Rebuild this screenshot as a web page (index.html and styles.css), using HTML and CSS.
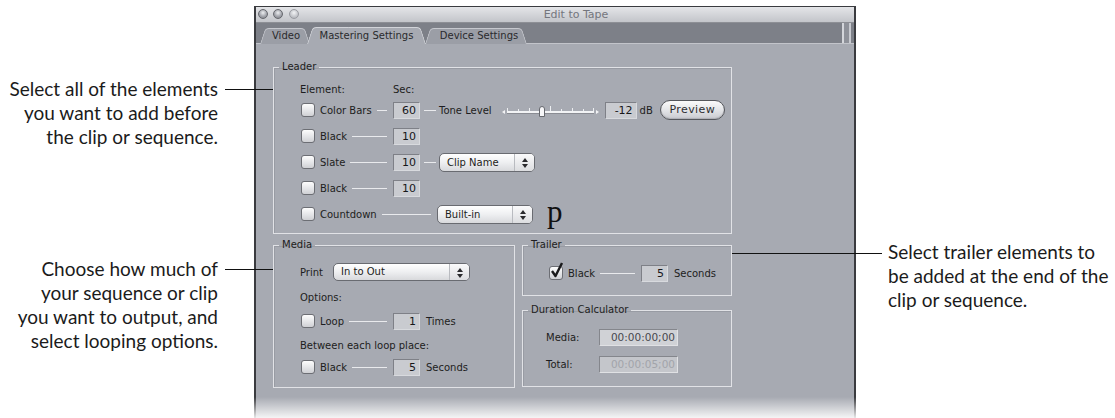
FILE: index.html
```html
<!DOCTYPE html>
<html lang="en">
<head>
  <meta charset="UTF-8" />
  <meta name="viewport" content="width=device-width, initial-scale=1.0" />
  <title>Edit to Tape</title>
  <link rel="stylesheet" href="styles.css">
</head>
<body>
<div class="page">
  <div class="window">
    <div class="titlebar">
      <div class="lights">
        <span class="light"></span>
        <span class="light"></span>
        <span class="light off"></span>
      </div>
      <div class="title">Edit to Tape</div>
    </div>
    <div class="tabbar">
      <div class="tab tab--video">Video</div>
      <div class="tab tab--active">Mastering Settings</div>
      <div class="tab tab--device">Device Settings</div>
      <div class="grip"></div>
    </div>
    <div class="body">
      <fieldset class="group leader">
        <legend>Leader</legend>
        <div class="group__inner">
          <div class="head"><span class="head__el">Element:</span><span>Sec:</span></div>
          <div class="row">
            <span class="check"></span>
            <span class="lead"><span>Color Bars</span><span class="rule"></span></span>
            <span class="field">60</span>
            <span class="dash"></span>
            <span>Tone Level</span>
            <svg class="slider" width="97" height="16" viewBox="0 0 97 16">
              <path d="M0 10 L3 8 L3 12 Z" fill="#f4f4f6" />
              <path d="M97 10 L94 8 L94 12 Z" fill="#f4f4f6" />
              <rect x="5" y="9" width="87" height="2" fill="#f2f3f5" />
              <rect x="5" y="11" width="87" height="1" fill="#8a8c93" />
              <g fill="#eceef1">
                <rect x="5" y="6" width="1" height="3" />
                <rect x="16" y="7" width="1" height="2" />
                <rect x="27" y="6" width="1" height="3" />
                <rect x="38" y="7" width="1" height="2" />
                <rect x="48" y="4" width="1" height="5" />
                <rect x="59" y="7" width="1" height="2" />
                <rect x="70" y="6" width="1" height="3" />
                <rect x="81" y="7" width="1" height="2" />
                <rect x="91" y="6" width="1" height="3" />
              </g>
              <path d="M37.5 14.5 L37.5 7 Q37.5 4.5 40 4.5 Q42.5 4.5 42.5 7 L42.5 14.5 Z" fill="#f6f6f8" stroke="#66686e" />
            </svg>
            <span class="field field--db">-12</span>
            <span class="unit">dB</span>
            <span class="button">Preview</span>
          </div>
          <div class="row">
            <span class="check"></span>
            <span class="lead"><span>Black</span><span class="rule"></span></span>
            <span class="field">10</span>
          </div>
          <div class="row">
            <span class="check"></span>
            <span class="lead"><span>Slate</span><span class="rule"></span></span>
            <span class="field">10</span>
            <span class="dash"></span>
            <span class="popup"><span class="popup__label">Clip Name</span><span class="popup__arrows"></span></span>
          </div>
          <div class="row">
            <span class="check"></span>
            <span class="lead"><span>Black</span><span class="rule"></span></span>
            <span class="field">10</span>
          </div>
          <div class="row">
            <span class="check"></span>
            <span class="lead lead--long"><span>Countdown</span><span class="rule"></span></span>
            <span class="popup"><span class="popup__label">Built-in</span><span class="popup__arrows"></span></span>
            <span class="stray">p</span>
          </div>
        </div>
      </fieldset>

      <div class="lower">
        <fieldset class="group media">
          <legend>Media</legend>
          <div class="group__inner">
            <div class="row row--print">
              <span class="print-label">Print</span>
              <span class="popup popup--wide"><span class="popup__label">In to Out</span><span class="popup__arrows"></span></span>
            </div>
            <div class="note note--options">Options:</div>
            <div class="row row--loop">
              <span class="check"></span>
              <span class="lead"><span>Loop</span><span class="rule"></span></span>
              <span class="field">1</span>
              <span class="after">Times</span>
            </div>
            <div class="note note--between">Between each loop place:</div>
            <div class="row row--black">
              <span class="check"></span>
              <span class="lead"><span>Black</span><span class="rule"></span></span>
              <span class="field">5</span>
              <span class="after">Seconds</span>
            </div>
          </div>
        </fieldset>

        <div class="side">
          <fieldset class="group trailer">
            <legend>Trailer</legend>
            <div class="group__inner">
              <div class="row row--trailer">
                <span class="check check--on">
                  <svg width="16" height="18" viewBox="0 0 16 18"><path d="M3 9 L6.5 14 L13 1" fill="none" stroke="#1a1a1c" stroke-width="2.4" stroke-linejoin="round" /></svg>
                </span>
                <span class="lead"><span>Black</span><span class="rule"></span></span>
                <span class="field">5</span>
                <span class="after">Seconds</span>
              </div>
            </div>
          </fieldset>
          <fieldset class="group duration">
            <legend>Duration Calculator</legend>
            <div class="group__inner">
              <div class="row row--time">
                <span class="time-label">Media:</span>
                <span class="timecode">00:00:00;00</span>
              </div>
              <div class="row row--time row--total">
                <span class="time-label">Total:</span>
                <span class="timecode timecode--off">00:00:05;00</span>
              </div>
            </div>
          </fieldset>
        </div>
      </div>
    </div>
  </div>

  <div class="callout callout--leader">Select all of the elements<br>you want to add before<br>the clip or sequence.</div>
  <div class="pointer pointer--leader"></div>
  <div class="callout callout--media">Choose how much of<br>your sequence or clip<br>you want to output, and<br>select looping options.</div>
  <div class="pointer pointer--media"></div>
  <div class="callout callout--trailer">Select trailer elements to<br>be added at the end of the<br>clip or sequence.</div>
  <div class="pointer pointer--trailer"></div>
</div>
</body>
</html>
```

FILE: styles.css
```css
* {
  box-sizing: border-box;
}
body {
  margin: 0;
  background: #fff;
}
.page {
  position: relative;
  width: 1115px;
  height: 418px;
  overflow: hidden;
  padding: 6px 0 0 254px;
  font-family: "DejaVu Sans", "Liberation Sans", sans-serif;
  font-size: 10px;
  color: #1d1d20;
}

/* window chrome */
.window {
  position: relative;
  width: 602px;
  height: 430px;
  border: 2px solid #3a3b3f;
  border-top-width: 1px;
  border-bottom: 0;
  background: #a7aab2;
}
.window::after {
  content: "";
  position: absolute;
  left: -2px;
  right: -2px;
  top: 390px;
  height: 28px;
  background: linear-gradient(rgba(255, 255, 255, 0), #fff 85%);
}
.titlebar {
  position: relative;
  height: 16px;
  background: linear-gradient(#e4e5e8, #c3c5ca);
  border-bottom: 1px solid #8d8f95;
}
.lights {
  position: absolute;
  left: 2px;
  top: 2px;
  display: flex;
  gap: 5px;
}
.light {
  width: 10px;
  height: 10px;
  border-radius: 50%;
  background: radial-gradient(circle at 50% 35%, #eceef1 0, #a3a5ac 55%, #7b7d84 100%);
  border: 1px solid #66686e;
}
.light.off {
  margin-left: 1px;
  background: radial-gradient(circle at 50% 35%, #f2f3f5 0, #c3c5ca 60%, #a9abb1 100%);
  border-color: #9a9ca2;
}
.title {
  text-align: center;
  padding-left: 42px;
  font-size: 11px;
  line-height: 16px;
  color: #74767d;
}
.tabbar {
  display: flex;
  align-items: flex-end;
  height: 21px;
  padding-left: 4px;
  background: #7d8088;
  border-bottom: 1px solid #c2c4ca;
}
.tab {
  position: relative;
  z-index: 1;
  height: 16px;
  line-height: 16px;
  margin-bottom: -1px;
  color: #2a2a2d;
  text-align: center;
}
.tab::before,
.tab::after {
  content: "";
  position: absolute;
  z-index: -1;
  top: 0;
  bottom: 0;
  width: 60%;
  background: #9b9ea6;
  border-top: 1px solid #c6c8ce;
}
.tab::before {
  left: 0;
  border-left: 1px solid #c6c8ce;
  border-radius: 4px 0 0 0;
  transform: skewX(-18deg);
  transform-origin: bottom left;
}
.tab::after {
  right: 0;
  border-right: 1px solid #c6c8ce;
  border-radius: 0 4px 0 0;
  transform: skewX(18deg);
  transform-origin: bottom right;
}
.tab--video {
  width: 50px;
  padding-left: 2px;
}
.tab--active {
  z-index: 2;
  width: 119px;
  margin-left: -3px;
  height: 17px;
  line-height: 17px;
}
.tab--active::before,
.tab--active::after {
  background: #a7aab2;
  border-color: #d2d4d9;
}
.tab--device {
  width: 102px;
  margin-left: -1px;
  padding-left: 6px;
}
.grip {
  align-self: stretch;
  margin-left: auto;
  margin-right: 3px;
  width: 9px;
  border-left: 2px solid #d4d6db;
  border-right: 2px solid #c8cad0;
  background: #8f929a;
}

/* content */
.body {
  padding: 17px 0 0 17px;
}
.group {
  margin: 0;
  padding: 0;
  min-width: 0;
  border: 1px solid #e1e2e6;
  box-shadow: inset 1px 1px 0 #989ba3;
}
.group legend {
  margin-left: 5px;
  padding: 0 3px;
  line-height: 12px;
  color: #1d1d20;
}
.leader {
  width: 459px;
}
.leader .group__inner {
  padding: 10px 0 6px 27px;
}
.head {
  display: flex;
  height: 14px;
  line-height: 14px;
  margin-left: -1px;
}
.head__el {
  width: 93px;
}
.row {
  display: flex;
  align-items: center;
  height: 26px;
  white-space: nowrap;
}
.check {
  position: relative;
  flex: none;
  width: 14px;
  height: 14px;
  margin-right: 5px;
  border: 1px solid #6c6e74;
  border-radius: 3px;
  background: linear-gradient(#fdfdfd, #e2e3e6 60%, #cfd0d4);
}
.check--on svg {
  position: absolute;
  left: -1px;
  top: -5px;
}
.lead {
  display: flex;
  align-items: center;
  flex: none;
  width: 73px;
}
.lead--long {
  width: 117px;
}
.rule {
  flex: 1;
  height: 1px;
  margin: 1px 6px 0 5px;
  background: #e9eaed;
}
.field {
  flex: none;
  width: 27px;
  height: 17px;
  padding-right: 3px;
  text-align: right;
  font-size: 11px;
  line-height: 16px;
  color: #17171a;
  background: #c9cbd0;
  border: 1px solid #d8dade;
  border-top-color: #7e8087;
  border-left-color: #7e8087;
}
.field--db {
  width: 32px;
  margin-left: 6px;
}
.dash {
  flex: none;
  width: 12px;
  height: 1px;
  margin: 1px 3px 0 4px;
  background: #e9eaed;
}
.slider {
  flex: none;
  margin-left: 10px;
}
.unit {
  margin-left: 3px;
}
.button {
  flex: none;
  width: 65px;
  height: 20px;
  margin-left: 7px;
  border: 1px solid #55575c;
  border-radius: 10px;
  background: linear-gradient(#fafafa, #e4e5e8 50%, #c9cacf);
  text-align: center;
  line-height: 18px;
  font-size: 11px;
  letter-spacing: 0.4px;
  color: #2e2e31;
  box-shadow: inset 0 -1px 1px #aeb0b5;
}
.popup {
  display: flex;
  flex: none;
  width: 96px;
  height: 19px;
  border: 1px solid #696b71;
  border-radius: 5px;
  background: linear-gradient(#ffffff, #eeeff1 50%, #d8d9dc);
  overflow: hidden;
}
.popup__label {
  flex: 1;
  padding-left: 7px;
  line-height: 17px;
  color: #1d1d20;
}
.popup__arrows {
  position: relative;
  width: 20px;
  border-left: 1px solid #b9bbc0;
  background: linear-gradient(#fafafb, #dcdde0);
}
.popup__arrows::before,
.popup__arrows::after {
  content: "";
  position: absolute;
  left: 7px;
  border-left: 3px solid transparent;
  border-right: 3px solid transparent;
}
.popup__arrows::before {
  top: 4px;
  border-bottom: 4px solid #2a2a2d;
}
.popup__arrows::after {
  top: 10px;
  border-top: 4px solid #2a2a2d;
}
.popup--wide {
  width: 137px;
  height: 18px;
}
.popup--wide .popup__label {
  line-height: 16px;
}
.stray {
  margin: -4px 0 0 14px;
  font-family: "Liberation Serif", serif;
  font-size: 31px;
  line-height: 26px;
  color: #111;
}

/* lower boxes */
.lower {
  display: flex;
  gap: 7px;
  margin-top: 5px;
}
.media {
  width: 242px;
}
.media .group__inner {
  padding: 11px 0 10px 27px;
}
.row--print {
  height: 20px;
  margin-left: -1px;
}
.print-label {
  width: 33px;
}
.note {
  height: 14px;
  line-height: 14px;
  margin-left: -1px;
}
.note--options {
  margin-top: 9px;
}
.row--loop {
  height: 20px;
  margin-top: 6px;
}
.note--between {
  margin-top: 8px;
}
.row--black {
  height: 20px;
  margin-top: 4px;
}
.after {
  margin-left: 6px;
}
.side {
  display: flex;
  flex-direction: column;
  gap: 8px;
  width: 210px;
}
.trailer .group__inner {
  padding: 12px 0 12px 26px;
}
.row--trailer {
  height: 20px;
}
.duration .group__inner {
  padding: 11px 0 12px 23px;
}
.row--time {
  height: 20px;
}
.row--total {
  margin-top: 7px;
}
.time-label {
  width: 53px;
}
.timecode {
  width: 79px;
  height: 17px;
  padding-right: 2px;
  text-align: right;
  font-size: 10.5px;
  line-height: 15px;
  color: #48494e;
  background: #d0d2d6;
  border: 1px solid #e0e1e4;
  border-top-color: #84868c;
  border-left-color: #84868c;
}
.timecode--off {
  color: #a2a4aa;
  background: #c4c6cb;
}

/* annotations around the window */
.callout {
  position: absolute;
  font-family: "Lato", "Open Sans", sans-serif;
  font-size: 19px;
  line-height: 24px;
  color: #1b1b1b;
}
.callout--leader,
.callout--media {
  right: 897px;
  text-align: right;
}
.callout--leader {
  top: 77px;
}
.callout--media {
  top: 257px;
}
.callout--trailer {
  left: 888px;
  top: 240px;
}
.pointer {
  position: absolute;
  height: 1px;
  background: #111;
}
.pointer--leader {
  left: 225px;
  width: 48px;
  top: 89px;
}
.pointer--media {
  left: 225px;
  width: 48px;
  top: 269px;
}
.pointer--trailer {
  left: 732px;
  width: 150px;
  top: 253px;
}
```
